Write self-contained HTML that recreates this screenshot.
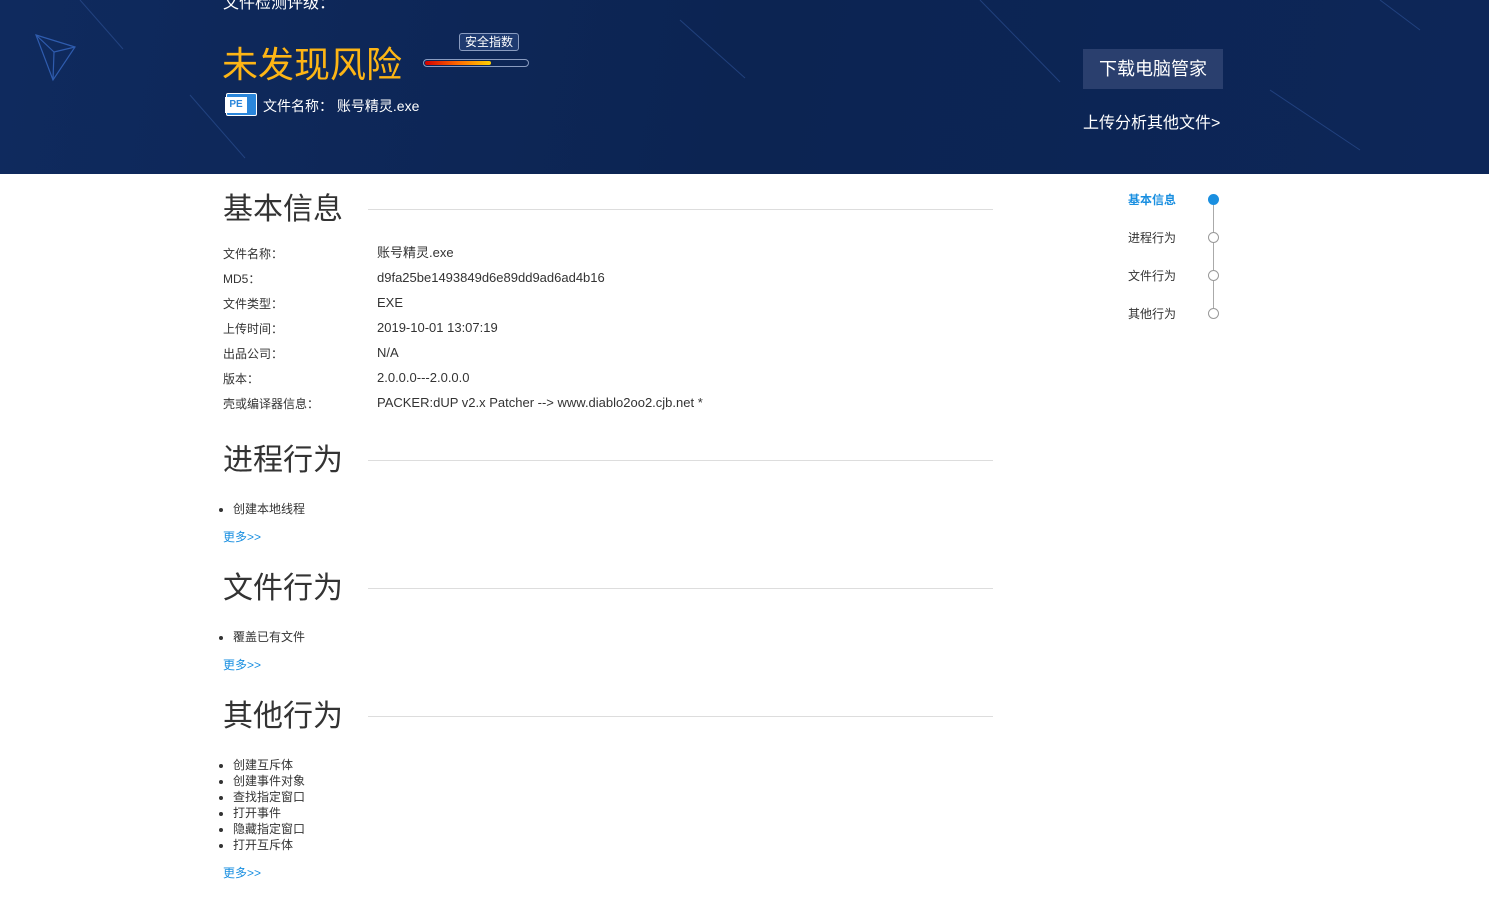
<!DOCTYPE html>
<html><head><meta charset="utf-8"><style>
*{margin:0;padding:0;box-sizing:border-box}
body{width:1489px;height:906px;overflow:hidden;background:#fff;font-family:"Liberation Sans","Noto Sans CJK SC",sans-serif;color:#333;position:relative}
.hd{position:absolute;left:0;top:0;width:1489px;height:174px;background:linear-gradient(100deg,#0f2a5e 0%,#0c2452 50%,#0d2658 100%);overflow:hidden}
.a{position:absolute;white-space:nowrap}
.h2{position:absolute;left:223px;font-size:30px;color:#333;line-height:36px}
.ln{position:absolute;left:368px;width:625px;height:1px;background:#ddd}
.lab{position:absolute;left:223px;font-size:12px}
.val{position:absolute;left:377px;font-size:13px;line-height:14px}
ul{position:absolute;left:233px;font-size:12px;line-height:16px;list-style:disc}
.more{position:absolute;left:223px;font-size:12px;color:#1a8fe0}
.nav{position:absolute;left:1128px;font-size:12px}
.dot{position:absolute;left:1208px;width:11px;height:11px;border:1px solid #999;border-radius:50%;background:#fff}
</style></head><body>
<div class="hd">
<svg width="1489" height="174" style="position:absolute;left:0;top:0">
<g stroke="#2a4d8f" stroke-width="1" opacity=".7">
<line x1="80" y1="0" x2="123" y2="49"/><line x1="190" y1="95" x2="245" y2="158"/>
<line x1="680" y1="20" x2="745" y2="78"/><line x1="980" y1="0" x2="1060" y2="82"/>
<line x1="1270" y1="90" x2="1360" y2="150"/><line x1="1380" y1="0" x2="1420" y2="30"/>
</g>
<g stroke="#2f5cae" stroke-width="1.2" fill="none"><polygon points="36,35 75,47 53,80"/><line x1="54" y1="52" x2="36" y2="35"/><line x1="54" y1="52" x2="75" y2="47"/><line x1="54" y1="52" x2="53" y2="80"/></g>
</svg>
<div class="a" style="left:223px;top:-11px;font-size:16px;color:#fff">文件检测评级：</div>
<div class="a" style="left:222px;top:43px;font-size:36px;color:#fdb515;line-height:44px">未发现风险</div>
<div class="a" style="left:459px;top:33px;width:60px;height:18px;border:1px solid #8a9cc0;border-radius:3px;background:#1e3a70;color:#fff;font-size:12px;text-align:center;line-height:16px">安全指数</div>
<div class="a" style="left:423px;top:59px;width:106px;height:8px;border:1px solid #8a9cc0;border-radius:4px"><div style="width:66px;height:4px;margin:1px;border-radius:2px;background:linear-gradient(90deg,#d30000,#ff6a00,#ffd000)"></div></div>
<div class="a" style="left:226px;top:93px;width:31px;height:23px;background:#2a86db;border:1px solid #fff;border-radius:2px"></div>
<div class="a" style="left:225px;top:97px;width:22px;height:16px;background:#fff;color:#2a86db;font-size:10px;font-weight:bold;text-align:center;line-height:16px">PE</div>
<div class="a" style="left:263px;top:96px;font-size:14px;color:#fff">文件名称： 账号精灵.exe</div>
<div class="a" style="left:1083px;top:49px;width:140px;height:40px;background:#2a3f6e;color:#fff;font-size:18px;text-align:center;line-height:40px">下载电脑管家</div>
<div class="a" style="left:1083px;top:114px;font-size:16px;color:#fff;line-height:20px">上传分析其他文件&gt;</div>
</div>

<div class="h2" style="top:192px">基本信息</div><div class="ln" style="top:209px"></div>
<div class="lab" style="top:245px">文件名称：</div><div class="val" style="top:246px">账号精灵.exe</div>
<div class="lab" style="top:270px">MD5：</div><div class="val" style="top:271px">d9fa25be1493849d6e89dd9ad6ad4b16</div>
<div class="lab" style="top:295px">文件类型：</div><div class="val" style="top:296px">EXE</div>
<div class="lab" style="top:320px">上传时间：</div><div class="val" style="top:321px">2019-10-01 13:07:19</div>
<div class="lab" style="top:345px">出品公司：</div><div class="val" style="top:346px">N/A</div>
<div class="lab" style="top:370px">版本：</div><div class="val" style="top:371px">2.0.0.0---2.0.0.0</div>
<div class="lab" style="top:395px">壳或编译器信息：</div><div class="val" style="top:396px">PACKER:dUP v2.x Patcher --&gt; www.diablo2oo2.cjb.net *</div>

<div class="h2" style="top:443px">进程行为</div><div class="ln" style="top:460px"></div>
<ul style="top:501px"><li>创建本地线程</li></ul>
<div class="more" style="top:528px">更多&gt;&gt;</div>

<div class="h2" style="top:571px">文件行为</div><div class="ln" style="top:588px"></div>
<ul style="top:629px"><li>覆盖已有文件</li></ul>
<div class="more" style="top:656px">更多&gt;&gt;</div>

<div class="h2" style="top:699px">其他行为</div><div class="ln" style="top:716px"></div>
<ul style="top:757px"><li>创建互斥体</li><li>创建事件对象</li><li>查找指定窗口</li><li>打开事件</li><li>隐藏指定窗口</li><li>打开互斥体</li></ul>
<div class="more" style="top:864px">更多&gt;&gt;</div>

<div class="a" style="left:1213px;top:200px;width:1px;height:113px;background:#aaa"></div>
<div class="nav" style="top:191px;color:#1a8fe0;font-weight:bold">基本信息</div>
<div class="nav" style="top:229px">进程行为</div>
<div class="nav" style="top:267px">文件行为</div>
<div class="nav" style="top:305px">其他行为</div>
<div class="dot" style="top:194px;background:#1a8fe0;border-color:#1a8fe0"></div>
<div class="dot" style="top:232px"></div>
<div class="dot" style="top:270px"></div>
<div class="dot" style="top:308px"></div>
</body></html>
